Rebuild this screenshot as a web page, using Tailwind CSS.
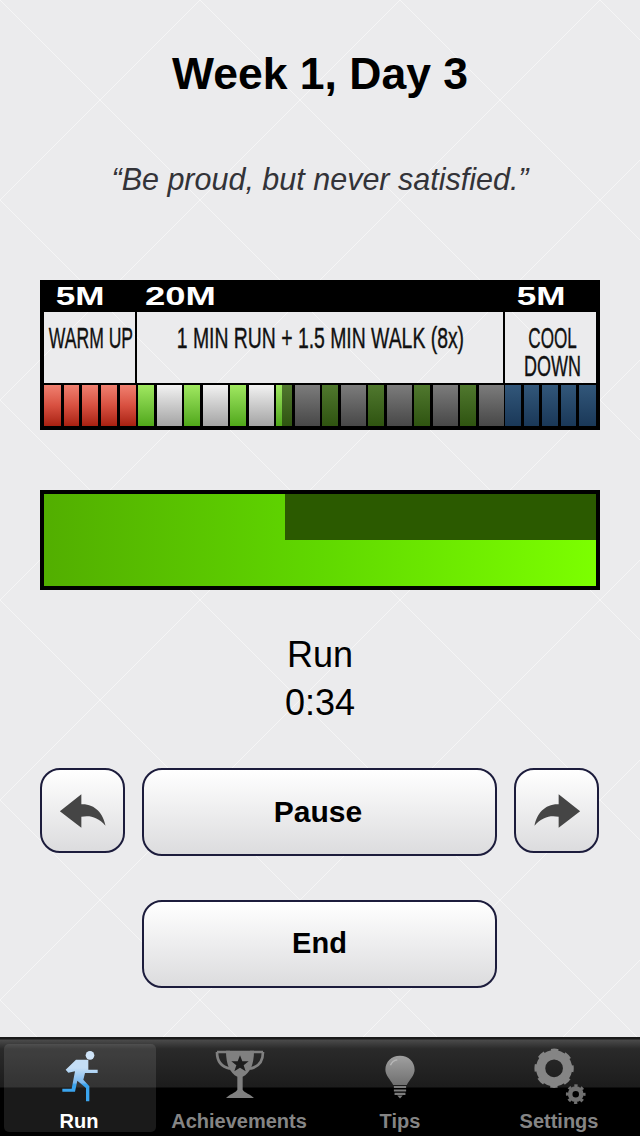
<!DOCTYPE html>
<html lang="en">
<head>
<meta charset="utf-8">
<title>Week 1, Day 3</title>
<script src="https://cdn.jsdelivr.net/npm/@tailwindcss/browser@4"></script>
</head>
<body class="m-0">
<div class="relative w-[640px] h-[1136px] overflow-hidden flex flex-col bg-[#ebebed] font-['Liberation_Sans',Arial,sans-serif]">
  <svg class="absolute left-0 top-0" width="640" height="1040" aria-hidden="true">
    <defs>
      <pattern id="quilt" width="200" height="200" patternUnits="userSpaceOnUse">
        <path d="M0 0L200 200M200 0L0 200" stroke="#f5f5f6" stroke-width="1" fill="none"/>
      </pattern>
    </defs>
    <rect width="640" height="1040" fill="url(#quilt)"/>
  </svg>

  <main class="relative h-[1037px] shrink-0 flex flex-col px-[40px]">
    <h1 class="mt-[48px] h-[52px] leading-[52px] text-center text-[44.5px] font-bold text-black">Week 1, Day 3</h1>
    <p class="mt-[54px] h-[50px] leading-[50px] text-center text-[30.5px] italic text-[#333338]">“Be proud, but never satisfied.”</p>

    <section class="mt-[76px] w-[560px] h-[150px] border-[4px] border-black flex flex-col">
      <div class="h-[28px] shrink-0 flex bg-black text-white text-[26px] leading-[24px] font-bold">
        <div class="w-[72px] shrink-0 flex justify-center"><span class="shrink-0 scale-x-[1.35]">5M</span></div>
        <div class="w-[370px] shrink-0 pl-[29px]"><span class="inline-block origin-left scale-x-[1.4]">20M</span></div>
        <div class="w-[110px] shrink-0 flex justify-center"><span class="shrink-0 scale-x-[1.35]">5M</span></div>
      </div>
      <div class="h-[71px] shrink-0 flex text-[30px] leading-[28px] text-[#111] [-webkit-text-stroke:0.4px_#111]">
        <div class="w-[91px] shrink-0 pt-[12px] pl-[2px] flex justify-center"><span class="shrink-0 whitespace-nowrap scale-x-[0.586]">WARM UP</span></div>
        <div class="w-[2px] shrink-0 bg-black"></div>
        <div class="w-[366px] shrink-0 pt-[12px] flex justify-center"><span class="shrink-0 whitespace-nowrap scale-x-[0.646]">1 MIN RUN + 1.5 MIN WALK (8x)</span></div>
        <div class="w-[2px] shrink-0 bg-black"></div>
        <div class="w-[91px] shrink-0 pt-[12px] pl-[4px] flex flex-col items-center"><span class="scale-x-[0.57]">COOL</span><span class="scale-x-[0.6]">DOWN</span></div>
      </div>
      <div class="flex-1 pt-[2px] bg-black flex gap-[3px]">
        <i class="block w-[17px] bg-gradient-to-b from-[#f08070] via-[#d85040] to-[#a82010]"></i>
        <i class="block w-[15px] bg-gradient-to-b from-[#f08070] via-[#d85040] to-[#a82010]"></i>
        <i class="block w-[16px] bg-gradient-to-b from-[#f08070] via-[#d85040] to-[#a82010]"></i>
        <i class="block w-[16px] bg-gradient-to-b from-[#f08070] via-[#d85040] to-[#a82010]"></i>
        <i class="block w-[16px] -mr-[1px] bg-gradient-to-b from-[#f08070] via-[#d85040] to-[#a82010]"></i>
        <i class="block w-[16px] bg-gradient-to-b from-[#a0e860] to-[#50a818]"></i>
        <i class="block w-[25px] bg-gradient-to-b from-[#f2f2f2] to-[#a4a4a4]"></i>
        <i class="block w-[16px] -ml-[1px] bg-gradient-to-b from-[#a0e860] to-[#50a818]"></i>
        <i class="block w-[25px] bg-gradient-to-b from-[#f2f2f2] to-[#a4a4a4]"></i>
        <i class="block w-[16px] -ml-[1px] bg-gradient-to-b from-[#a0e860] to-[#50a818]"></i>
        <i class="block w-[25px] bg-gradient-to-b from-[#f2f2f2] to-[#a4a4a4]"></i>
        <i class="flex w-[16px] -ml-[1px]">
          <b class="block w-[6px] bg-gradient-to-b from-[#a0e860] to-[#50a818]"></b>
          <b class="block flex-1 bg-gradient-to-b from-[#50782e] to-[#2f5410]"></b>
        </i>
        <i class="block w-[25px] bg-gradient-to-b from-[#7c7c7c] to-[#484848]"></i>
        <i class="block w-[16px] -ml-[1px] bg-gradient-to-b from-[#50782e] to-[#2f5410]"></i>
        <i class="block w-[25px] bg-gradient-to-b from-[#7c7c7c] to-[#484848]"></i>
        <i class="block w-[16px] -ml-[1px] bg-gradient-to-b from-[#50782e] to-[#2f5410]"></i>
        <i class="block w-[25px] bg-gradient-to-b from-[#7c7c7c] to-[#484848]"></i>
        <i class="block w-[16px] -ml-[1px] bg-gradient-to-b from-[#50782e] to-[#2f5410]"></i>
        <i class="block w-[25px] bg-gradient-to-b from-[#7c7c7c] to-[#484848]"></i>
        <i class="block w-[16px] -ml-[1px] bg-gradient-to-b from-[#50782e] to-[#2f5410]"></i>
        <i class="block w-[25px] -mr-[2px] bg-gradient-to-b from-[#7c7c7c] to-[#484848]"></i>
        <i class="block w-[16px] bg-gradient-to-b from-[#32577a] to-[#1a3858]"></i>
        <i class="block w-[15px] bg-gradient-to-b from-[#32577a] to-[#1a3858]"></i>
        <i class="block w-[16px] bg-gradient-to-b from-[#32577a] to-[#1a3858]"></i>
        <i class="block w-[15px] bg-gradient-to-b from-[#32577a] to-[#1a3858]"></i>
        <i class="block w-[17px] bg-gradient-to-b from-[#32577a] to-[#1a3858]"></i>
      </div>
    </section>

    <section class="mt-[60px] w-[560px] h-[100px] border-[4px] border-black bg-gradient-to-r from-[#52ae00] via-[#60d800] via-50% to-[#7cff00] flex justify-end">
      <div class="w-[311px] h-[46px] bg-[#2b5a00]"></div>
    </section>

    <div class="mt-[41px] text-center text-[36px] leading-[48px] text-black">
      <div class="h-[48px]">Run</div>
      <div class="h-[48px]">0:34</div>
    </div>

    <div class="mt-[41px] flex items-start w-[560px]">
      <button class="w-[85px] h-[85px] shrink-0 flex items-center justify-center rounded-[20px] border-2 border-[#1c1c3c] bg-gradient-to-b from-white to-[#dcdcde]" aria-label="Back">
        <svg width="50" height="38" viewBox="85 95 150 115"><path d="M90 153L155 102V132C195 130 222 160 228 197C205 170 180 165 155 170V203Z" fill="#454545"/></svg>
      </button>
      <button class="ml-[17px] w-[355px] h-[88px] shrink-0 pb-[2px] rounded-[20px] border-2 border-[#1c1c3c] bg-gradient-to-b from-white to-[#dcdcde] text-[30px] font-bold text-black pr-[3px]">Pause</button>
      <button class="ml-[17px] w-[85px] h-[85px] shrink-0 flex items-center justify-center rounded-[20px] border-2 border-[#1c1c3c] bg-gradient-to-b from-white to-[#dcdcde]" aria-label="Forward">
        <svg width="50" height="38" viewBox="85 95 150 115"><path d="M230 153L165 102V132C125 130 98 160 92 197C115 170 140 165 165 170V203Z" fill="#454545"/></svg>
      </button>
    </div>
    <button class="mt-[44px] ml-[102px] w-[355px] h-[88px] rounded-[20px] border-2 border-[#1c1c3c] bg-gradient-to-b from-white to-[#dcdcde] text-[29px] font-bold text-black">End</button>
  </main>

  <nav class="relative flex-1 flex bg-[linear-gradient(to_bottom,#1a1a1a_0,#1a1a1a_2px,#4a4a4a_3px,#2a2a2a_12px,#1c1c1c_50px,#000_51px,#000_100%)] font-bold text-[20px]">
    <div class="absolute left-[4px] top-[7px] w-[152px] h-[88px] rounded-[5px] bg-white/10"></div>
    <a class="relative w-[160px] h-[99px] flex flex-col items-center text-white">
      <svg class="mt-[11px] h-[55px] shrink-0" width="40" height="55" viewBox="180 50 120 165">
        <defs><linearGradient id="runner" x1="0" y1="0" x2="0" y2="1"><stop offset="0.2" stop-color="#c4def6"/><stop offset="0.55" stop-color="#7ab8ee"/><stop offset="0.6" stop-color="#3aa4ee"/><stop offset="1" stop-color="#3aa4ee"/></linearGradient></defs>
        <circle cx="270" cy="72" r="13" fill="#cfe4f8"/>
        <path d="M228 85H265V115H293V125H255L250 145L268 165V210H258V170L232 148L225 181H187V172H215L225 120L205 124L197 115Z" fill="url(#runner)"/>
      </svg>
      <span class="mt-[6px] -translate-x-[1px] leading-[24px]">Run</span>
    </a>
    <a class="relative w-[160px] h-[99px] flex flex-col items-center text-[#858585]">
      <svg class="mt-[11px] h-[55px] shrink-0" width="50" height="55" viewBox="645 60 150 165">
        <path d="M651 72H690M750 72H789" stroke="#808080" stroke-width="8" fill="none"/>
        <path d="M651 72C651 105 670 118 690 122M789 72C789 105 770 118 750 122" stroke="#808080" stroke-width="8" fill="none"/>
        <path d="M678 68H762C762 110 750 135 728 146V185C735 195 750 198 762 210H678C690 198 705 195 712 185V146C690 135 678 110 678 68Z" fill="#808080"/>
        <path d="M720 82L727 100H746L731 112L737 130L720 119L703 130L709 112L694 100H713Z" fill="#1d1d1d"/>
      </svg>
      <span class="mt-[6px] -translate-x-[1px] leading-[24px]">Achievements</span>
    </a>
    <a class="relative w-[160px] h-[99px] flex flex-col items-center text-[#858585]">
      <svg class="mt-[11px] h-[55px] shrink-0" width="34" height="55" viewBox="190 50 100 160">
        <defs><linearGradient id="bulb" x1="0" y1="0" x2="0" y2="1"><stop offset="0" stop-color="#a0a0a0"/><stop offset="1" stop-color="#707070"/></linearGradient></defs>
        <path d="M240 72C265 72 283 90 283 113C283 130 268 142 260 158H220C212 142 197 130 197 113C197 90 215 72 240 72Z" fill="url(#bulb)"/>
        <path d="M222 164H258M222 174H258M224 184H256" stroke="#7c7c7c" stroke-width="6"/>
        <path d="M232 189H248L240 198Z" fill="#7c7c7c"/>
        <path d="M212 100C216 90 224 85 232 84" stroke="#b8b8b8" stroke-width="4" fill="none"/>
      </svg>
      <span class="mt-[6px] leading-[24px]">Tips</span>
    </a>
    <a class="relative w-[160px] h-[99px] flex flex-col items-center text-[#858585]">
      <svg class="mt-[9px] h-[59px] shrink-0" width="56" height="59" viewBox="635 45 170 180">
        <circle cx="702" cy="113" r="41" fill="none" stroke="#858585" stroke-width="28"/>
        <circle cx="702" cy="113" r="52" fill="none" stroke="#858585" stroke-width="16" stroke-dasharray="21 19.84" stroke-dashoffset="10.5"/>
        <circle cx="768" cy="192" r="17" fill="none" stroke="#707070" stroke-width="14"/>
        <circle cx="768" cy="192" r="26" fill="none" stroke="#707070" stroke-width="8" stroke-dasharray="10 10.4" stroke-dashoffset="5"/>
      </svg>
      <span class="mt-[4px] -translate-x-[1px] leading-[24px]">Settings</span>
    </a>
  </nav>
</div>
</body>
</html>
